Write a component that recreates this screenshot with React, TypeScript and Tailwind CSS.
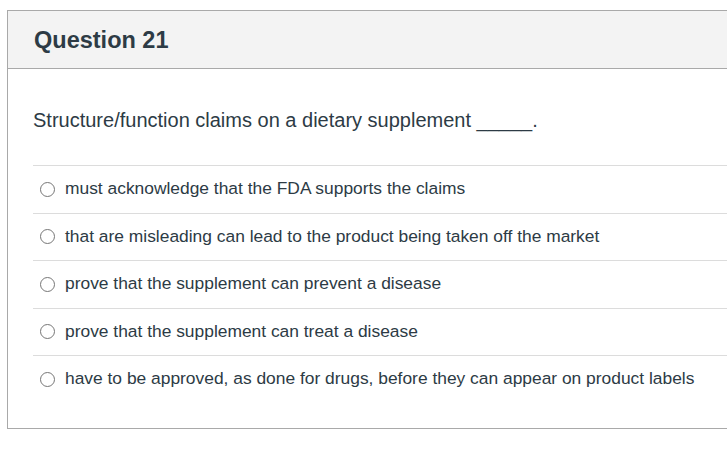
import React from 'react';

const answers = [
  'must acknowledge that the FDA supports the claims',
  'that are misleading can lead to the product being taken off the market',
  'prove that the supplement can prevent a disease',
  'prove that the supplement can treat a disease',
  'have to be approved, as done for drugs, before they can appear on product labels',
];

export default function App() {
  return (
    <div className="w-[727px] h-[465px] overflow-hidden bg-white pt-[10px] pl-[7px]" style={{ fontFamily: '"Liberation Sans", Arial, sans-serif' }}>
      <div className="w-[760px] border border-r-0 border-[#a9a9a9]">
        <div className="h-[58px] bg-[#f3f3f3] border-b border-[#a9a9a9] flex items-center pl-[26px]">
          <h2 className="text-[23.5px] font-bold text-[#2d3b45] mt-[2px]">Question 21</h2>
        </div>
        <div className="pl-[25px] pb-[25px]">
          <div className="pt-[37px] pb-[31px] text-[20px] leading-[28px] text-[#2d3b45]">
            Structure/function claims on a dietary supplement _____.
          </div>
          {answers.map((a) => (
            <div key={a} className="h-[47.5px] border-t border-[#dcdcdc] flex items-center">
              <span className="ml-[7px] w-[15px] h-[15px] rounded-full border border-[#767676] bg-white shrink-0" />
              <span className="ml-[10px] -mt-[2px] text-[17.4px] text-[#2d3b45]">{a}</span>
            </div>
          ))}
        </div>
      </div>
    </div>
  );
}
